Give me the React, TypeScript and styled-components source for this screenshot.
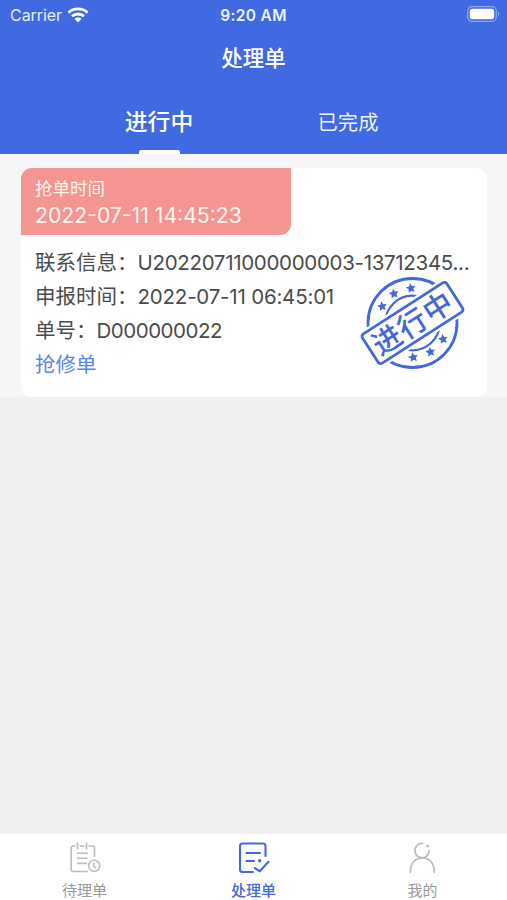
import React from "react";
import styled, { createGlobalStyle } from "styled-components";

const Global = createGlobalStyle`
  * { box-sizing: border-box; }
  body {
    margin: 0;
    font-family: Inter, "Noto Sans CJK SC", sans-serif;
    background: #f0f0f0;
  }
`;

const Screen = styled.div`
  width: 507px;
  height: 900px;
  display: flex;
  flex-direction: column;
  background: #f0f0f0;
  overflow: hidden;
`;

const Header = styled.header`
  height: 154px;
  flex: none;
  background: #4169e1;
  color: #fff;
  display: flex;
  flex-direction: column;
`;

const StatusBar = styled.div`
  height: 30px;
  display: grid;
  grid-template-columns: 1fr auto 1fr;
  align-items: center;
  padding: 0 7px 0 10px;
`;

const Carrier = styled.div`
  display: flex;
  align-items: center;
  gap: 5px;
  font-size: 16px;
  letter-spacing: -0.05px;
  color: #e6ecff;
`;

const Clock = styled.div`
  font-size: 15.5px;
  font-weight: 600;
  letter-spacing: 0.35px;
  margin-left: -3px;
  color: #edf1ff;
`;

const BatterySlot = styled.div`
  display: flex;
  justify-content: flex-end;
  padding-bottom: 2px;
`;

const Title = styled.h1`
  margin: 0;
  height: 56px;
  line-height: 56px;
  text-align: center;
  font-size: 21.5px;
  font-weight: 500;
`;

const Tabs = styled.div`
  flex: 1;
  display: grid;
  grid-template-columns: 189px 189px;
  justify-content: center;
`;

const Tab = styled.div<{ $active?: boolean }>`
  display: flex;
  flex-direction: column;
  align-items: center;
  justify-content: space-between;
  font-size: ${(p) => (p.$active ? 22.8 : 20.3)}px;
  font-weight: ${(p) => (p.$active ? 500 : 400)};
  line-height: 34px;
  padding-top: ${(p) => (p.$active ? 19 : 20)}px;
  color: ${(p) => (p.$active ? "#fff" : "#edf1ff")};
`;

const Indicator = styled.span`
  width: 41px;
  height: 4px;
  border-radius: 2px 2px 0 0;
  background: #fff;
`;

const List = styled.main`
  flex: none;
  padding: 14px 20px 0 21px;
  background: #f6f6f7;
`;

const Card = styled.article`
  height: 229px;
  border-radius: 11px;
  background: #fff;
  overflow: hidden;
  position: relative;
`;

const Grab = styled.div`
  width: 270px;
  height: 67px;
  padding: 9px 14px 0;
  border-radius: 0 0 11px 0;
  background: #f49592;
  color: #fff4ee;
`;

const GrabLabel = styled.div`
  font-size: 17.5px;
  line-height: 24px;
`;

const GrabTime = styled.div`
  font-size: 21.2px;
  line-height: 29px;
  white-space: nowrap;
`;

const Details = styled.div`
  padding: 11px 14px 0;
  color: #4b4b4b;
`;

const Line = styled.div<{ $link?: boolean }>`
  height: 34px;
  line-height: 34px;
  display: flex;
  font-size: 20.5px;
  white-space: nowrap;
  color: ${(p) => (p.$link ? "#5887e6" : "inherit")};
`;

const Value = styled.span<{ $spacing?: number }>`
  letter-spacing: ${(p) => p.$spacing ?? 0}px;
`;

const StampLayer = styled.svg`
  position: absolute;
  left: 336px;
  top: 105px;
  width: 112px;
  height: 100px;
`;

const StampText = styled.text`
  font-family: "Noto Sans CJK SC", sans-serif;
  font-size: 29px;
  font-weight: 500;
  letter-spacing: 1.2px;
`;

const Spacer = styled.div`
  flex: 1;
`;

const NavBar = styled.nav`
  height: 66px;
  flex: none;
  display: grid;
  grid-template-columns: repeat(3, 1fr);
  background: #fff;
`;

const NavItem = styled.div<{ $active?: boolean }>`
  display: flex;
  flex-direction: column;
  align-items: center;
  padding-top: 6px;
  font-size: 15px;
  line-height: 22px;
  font-weight: ${(p) => (p.$active ? 500 : 400)};
  color: ${(p) => (p.$active ? "#4169e1" : "#999")};
  svg {
    margin-bottom: 4px;
    color: ${(p) => (p.$active ? "#4169e1" : "#bdbdbd")};
  }
`;

const starPoints = (cx: number, cy: number, r: number) =>
  Array.from({ length: 10 }, (_, i) => {
    const a = (-100 + i * 36) * (Math.PI / 180);
    const d = i % 2 ? r * 0.48 : r;
    return `${(cx + d * Math.cos(a)).toFixed(2)},${(cy + d * Math.sin(a)).toFixed(2)}`;
  }).join(" ");

const STARS: [number, number][] = [
  [25.7, 36.4], [37.4, 23.8], [54.4, 18.2],
  [56.7, 87.4], [74, 82], [86.6, 69.2],
];

const Stamp = () => (
  <StampLayer viewBox="0 0 112 100" fill="none" stroke="#4169d8">
    <g transform="translate(-0.5 -3)">
      <circle cx="56" cy="53" r="44.5" strokeWidth="2.8" />
      <circle cx="56" cy="53" r="27.3" strokeWidth="2.2" />
      {STARS.map(([x, y]) => (
        <polygon key={`${x}`} points={starPoints(x, y, 5.2)} fill="#4169d8" stroke="none" />
      ))}
      <g transform="rotate(-32.8 56 53)">
        <rect x="2" y="32" width="108" height="42" fill="#fff" stroke="none" />
        <rect x="5.8" y="35.6" width="100.4" height="34.8" rx="3" strokeWidth="2.8" />
        <StampText x="56.2" y="63.8" textAnchor="middle" fill="#4169d8" stroke="none">
          进行中
        </StampText>
      </g>
    </g>
  </StampLayer>
);

const Wifi = () => (
  <svg width="22" height="16" viewBox="0 0 22 16" fill="none" stroke="#fff" strokeWidth="2.8">
    <path d="M1.5 5.6C6.8.7 15.2.7 20.5 5.6" />
    <path d="M5 9.3C8.4 6.2 13.6 6.2 17 9.3" />
    <path d="M11 15.4 7.6 11.9C9.5 10.1 12.5 10.1 14.4 11.9Z" fill="#fff" stroke="none" />
  </svg>
);

const Battery = () => (
  <svg width="33" height="16" viewBox="0 0 33 16">
    <rect x=".7" y=".7" width="28.6" height="14.6" rx="4.5" fill="none" stroke="#8fa7f2" strokeWidth="1.2" />
    <rect x="2.8" y="2.8" width="24.4" height="10.4" rx="2.6" fill="#fff" />
    <path d="M31 5.5c1.7.8 1.7 4.2 0 5Z" fill="#8fa7f2" />
  </svg>
);

const PendingIcon = () => (
  <svg width="34" height="36" viewBox="0 0 34 36" fill="none" stroke="currentColor" strokeWidth="1.6">
    <path d="M7.5 6H5.2Q3.2 6 3.2 8V29.5Q3.2 31.5 5.2 31.5H20M11.5 6h5M20.5 6h4Q26.5 6 26.5 8V17" />
    <path d="M9.5 2.5v7M18.5 2.5v7M9 13.3h11M9 18.3h10.5M9 23.4h10" />
    <circle cx="26.2" cy="25.8" r="5.6" />
    <path d="M26 22.5v3.7l2 2" />
  </svg>
);

const ProcessIcon = () => (
  <svg width="34" height="36" viewBox="0 0 34 36" fill="none" stroke="currentColor" strokeWidth="2.1" strokeLinecap="round" strokeLinejoin="round">
    <path d="M16 32H5.5Q3 32 3 29.5V6Q3 3.5 5.5 3.5H26Q28.5 3.5 28.5 6V16" />
    <path d="M9.5 13h13.5M9.5 21h7.5M17.8 28 22.8 31.3 31.5 21.8" />
    <circle cx="22.7" cy="20.8" r="1.7" fill="currentColor" stroke="none" />
  </svg>
);

const ProfileIcon = () => (
  <svg width="34" height="36" viewBox="0 0 34 36" fill="none" stroke="currentColor" strokeWidth="1.8" strokeLinecap="round">
    <path d="M16.6 3.4A7.2 7.2 0 1 0 23.2 11" />
    <circle cx="21.5" cy="6" r="1.5" fill="currentColor" stroke="none" />
    <path d="M4.3 32.3C4.3 22.8 9.3 17.8 16.3 17.8S28.3 22.8 28.3 32.3" />
  </svg>
);

export default function App() {
  return (
    <>
      <Global />
      <Screen>
        <Header>
          <StatusBar>
            <Carrier>
              Carrier
              <Wifi />
            </Carrier>
            <Clock>9:20 AM</Clock>
            <BatterySlot>
              <Battery />
            </BatterySlot>
          </StatusBar>
          <Title>处理单</Title>
          <Tabs>
            <Tab $active>
              进行中
              <Indicator />
            </Tab>
            <Tab>已完成</Tab>
          </Tabs>
        </Header>
        <List>
          <Card>
            <Grab>
              <GrabLabel>抢单时间</GrabLabel>
              <GrabTime>2022-07-11 14:45:23</GrabTime>
            </Grab>
            <Details>
              <Line>联系信息：<Value $spacing={-0.31}>U20220711000000003-13712345...</Value></Line>
              <Line>申报时间：<Value $spacing={-0.2}>2022-07-11 06:45:01</Value></Line>
              <Line>单号：<Value $spacing={-0.48}>D000000022</Value></Line>
              <Line $link>抢修单</Line>
            </Details>
            <Stamp />
          </Card>
        </List>
        <Spacer />
        <NavBar>
          <NavItem>
            <PendingIcon />
            待理单
          </NavItem>
          <NavItem $active>
            <ProcessIcon />
            处理单
          </NavItem>
          <NavItem>
            <ProfileIcon />
            我的
          </NavItem>
        </NavBar>
      </Screen>
    </>
  );
}
